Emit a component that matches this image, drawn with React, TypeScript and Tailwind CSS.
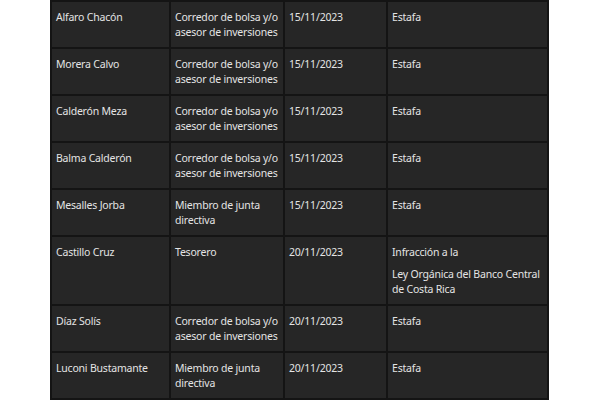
const rows: { name: string; role: string[]; date: string; crime: string[][] }[] = [
  { name: 'Alfaro Chacón', role: ['Corredor de bolsa y/o', 'asesor de inversiones'], date: '15/11/2023', crime: [['Estafa']] },
  { name: 'Morera Calvo', role: ['Corredor de bolsa y/o', 'asesor de inversiones'], date: '15/11/2023', crime: [['Estafa']] },
  { name: 'Calderón Meza', role: ['Corredor de bolsa y/o', 'asesor de inversiones'], date: '15/11/2023', crime: [['Estafa']] },
  { name: 'Balma Calderón', role: ['Corredor de bolsa y/o', 'asesor de inversiones'], date: '15/11/2023', crime: [['Estafa']] },
  { name: 'Mesalles Jorba', role: ['Miembro de junta', 'directiva'], date: '15/11/2023', crime: [['Estafa']] },
  {
    name: 'Castillo Cruz',
    role: ['Tesorero'],
    date: '20/11/2023',
    crime: [['Infracción a la'], ['Ley Orgánica del Banco Central', 'de Costa Rica']],
  },
  { name: 'Díaz Solís', role: ['Corredor de bolsa y/o', 'asesor de inversiones'], date: '20/11/2023', crime: [['Estafa']] },
  { name: 'Luconi Bustamante', role: ['Miembro de junta', 'directiva'], date: '20/11/2023', crime: [['Estafa']] },
]

const cell = 'border border-[#141414] px-[4px] pt-[8px] pb-[7px] align-top whitespace-nowrap'

export default function App() {
  return (
    <div className="w-[600px] h-[400px] overflow-hidden bg-white">
      <table
        className="ml-[50px] w-[497px] table-fixed border-separate border-spacing-0 border border-[#141414] bg-[#262626] text-[10.5px] leading-[15px] tracking-[-0.2px] text-[#e4e4e4]"
        style={{ fontFamily: '"Noto Sans", "Open Sans", sans-serif' }}
      >
        <colgroup>
          <col className="w-[119px]" />
          <col className="w-[114px]" />
          <col className="w-[103px]" />
          <col className="w-[161px]" />
        </colgroup>
        <tbody>
          {rows.map((r) => (
            <tr key={r.name}>
              <td className={cell}>{r.name}</td>
              <td className={cell}>
                {r.role.map((l) => (
                  <div key={l}>{l}</div>
                ))}
              </td>
              <td className={cell}>{r.date}</td>
              <td className={cell}>
                {r.crime.map((p, i) => (
                  <p key={i} className={i > 0 ? 'mt-[7px]' : ''}>
                    {p.map((l) => (
                      <span key={l} className="block">
                        {l}
                      </span>
                    ))}
                  </p>
                ))}
              </td>
            </tr>
          ))}
        </tbody>
      </table>
    </div>
  )
}
